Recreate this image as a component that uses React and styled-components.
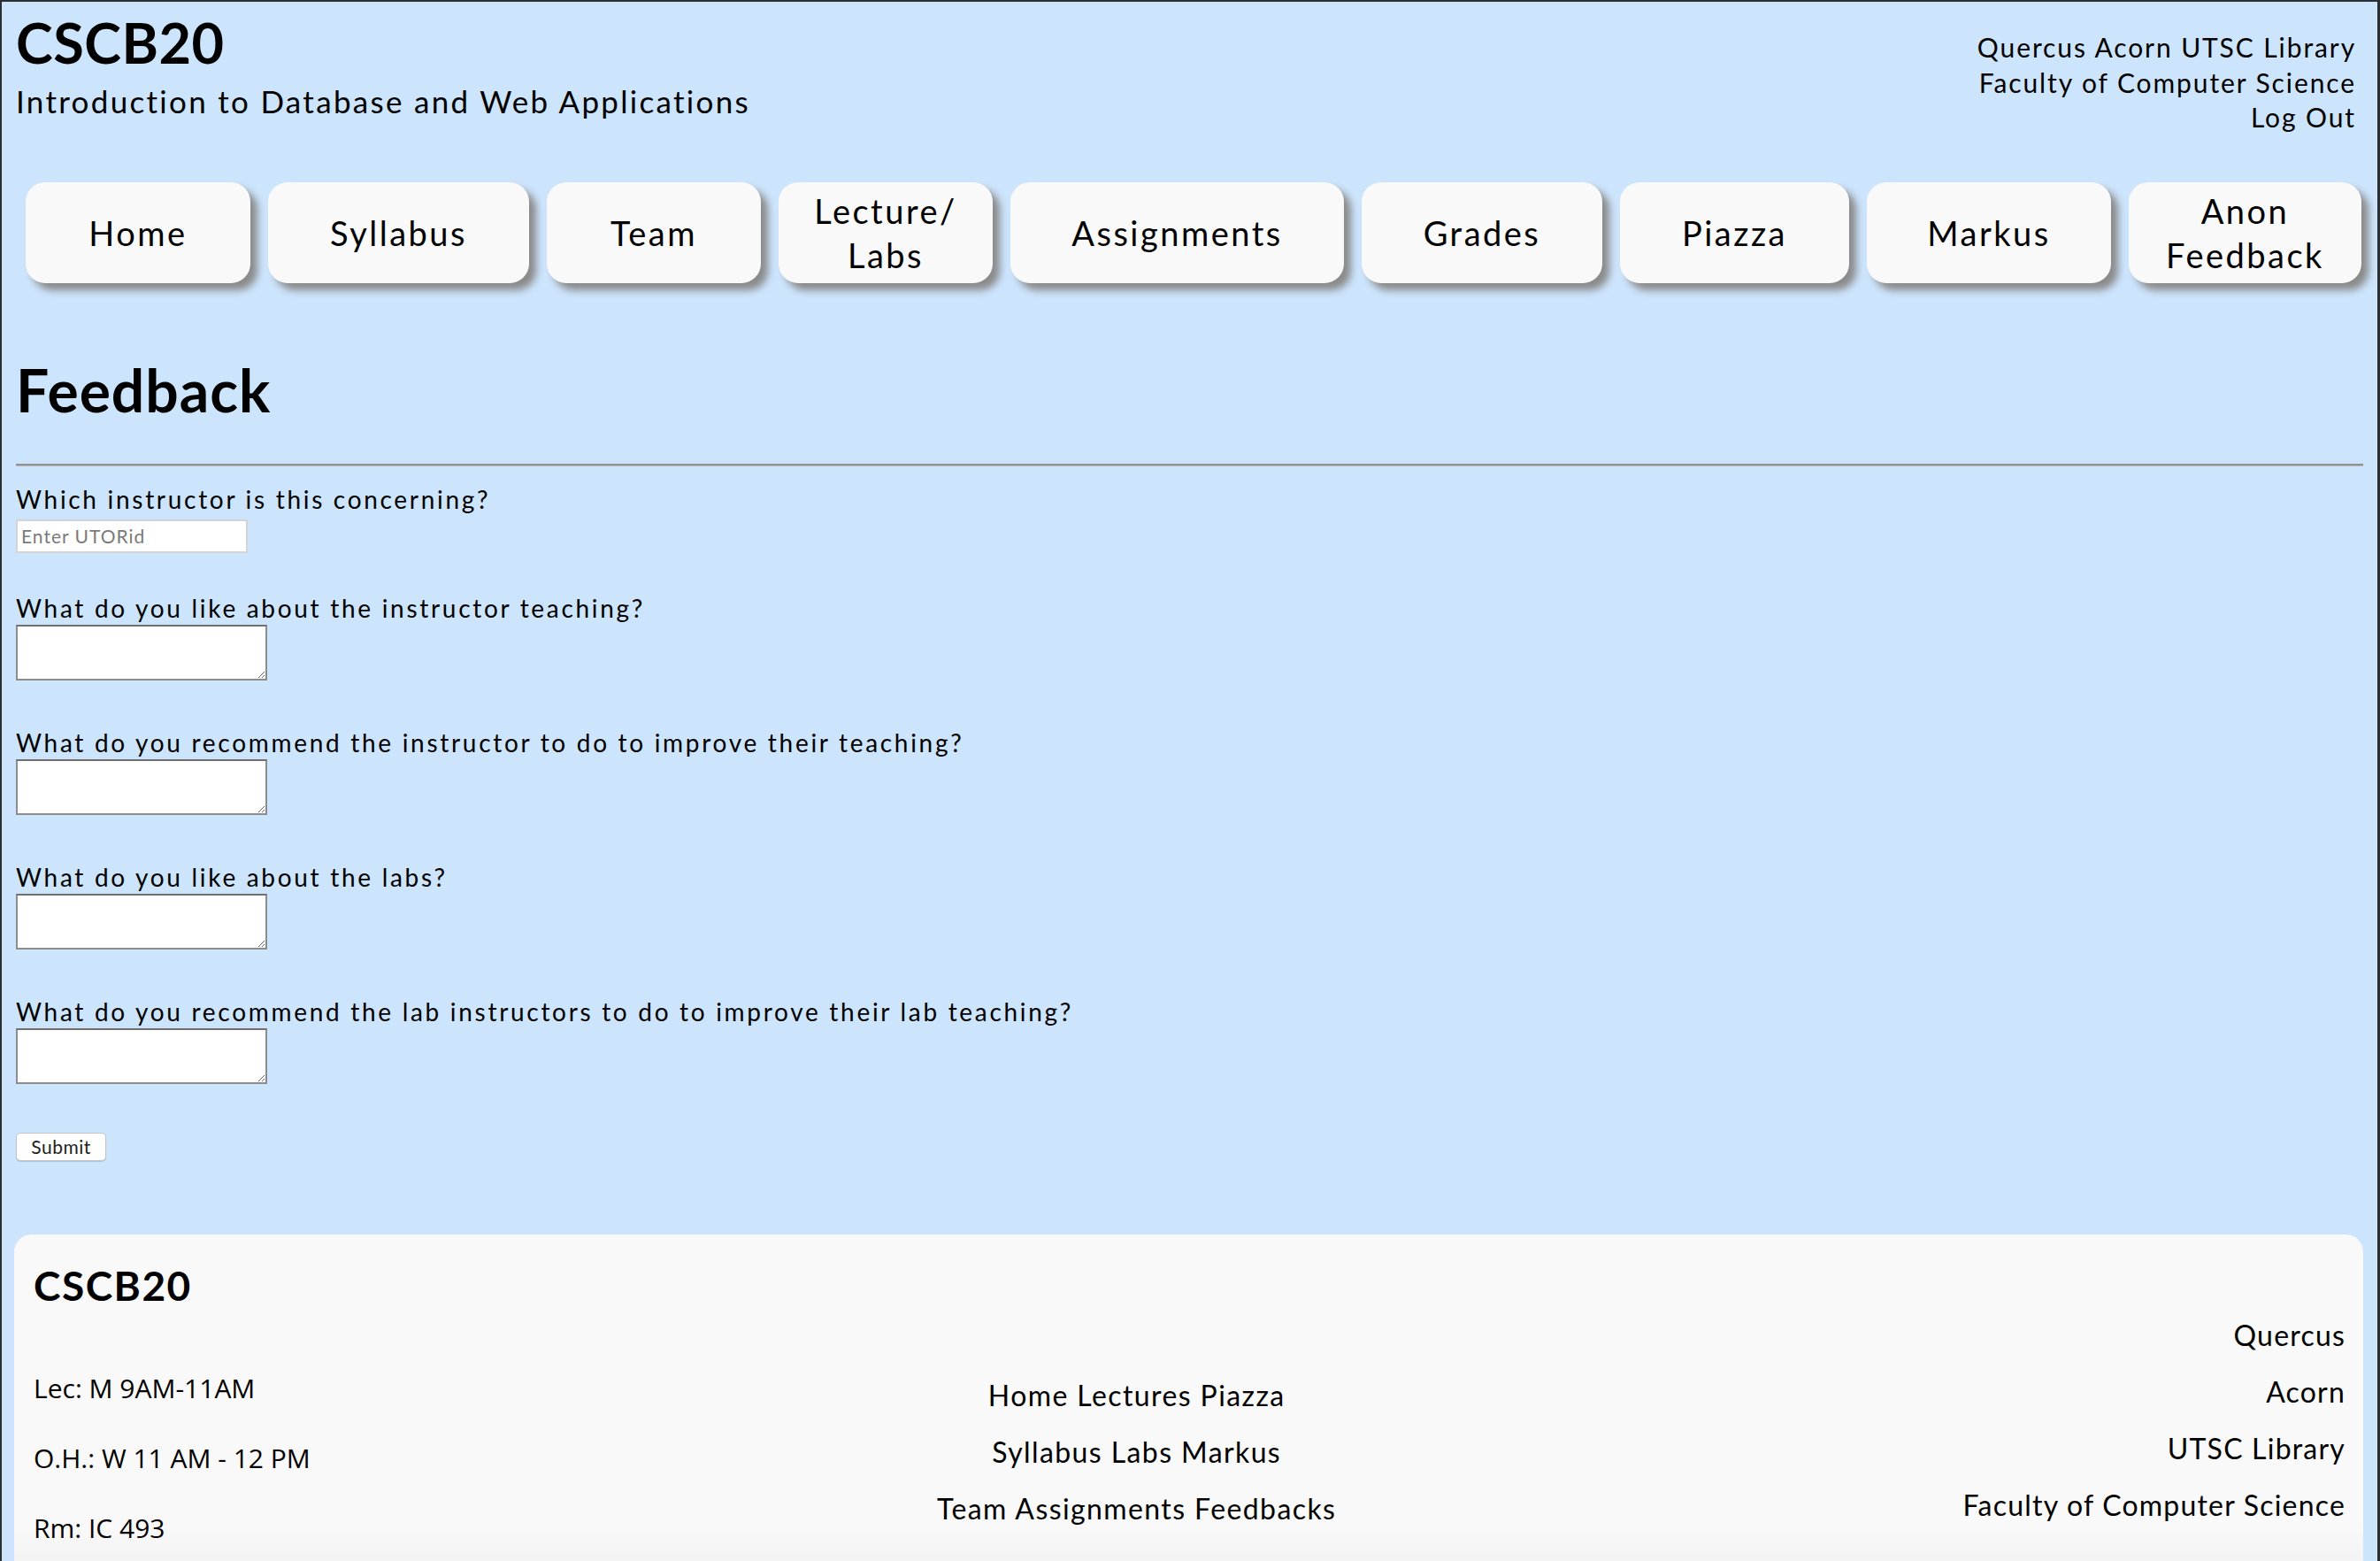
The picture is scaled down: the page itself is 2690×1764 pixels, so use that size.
import React from "react";
import styled, { createGlobalStyle } from "styled-components";

const GlobalStyle = createGlobalStyle`
  html, body {
    margin: 0;
    padding: 0;
    background: #2b2e33;
  }
  body {
    font-family: "Lato", "Noto Sans", sans-serif;
    color: #000;
  }
`;

const navItems = [
  { label: "Home", w: 254 },
  { label: "Syllabus", w: 295 },
  { label: "Team", w: 242 },
  { label: "Lecture/ Labs", w: 242 },
  { label: "Assignments", w: 377 },
  { label: "Grades", w: 272 },
  { label: "Piazza", w: 259 },
  { label: "Markus", w: 276 },
  { label: "Anon Feedback", w: 263 },
];

const questions = [
  "What do you like about the instructor teaching?",
  "What do you recommend the instructor to do to improve their teaching?",
  "What do you like about the labs?",
  "What do you recommend the lab instructors to do to improve their lab teaching?",
];

export default function App() {
  return (
    <>
      <GlobalStyle />
      <Frame>
        <Header>
          <div className="brand">
            <h1>CSCB20</h1>
            <p>Introduction to Database and Web Applications</p>
          </div>
          <div className="links">
            <div>Quercus Acorn UTSC Library</div>
            <div>Faculty of Computer Science</div>
            <div>Log Out</div>
          </div>
        </Header>

        <Nav>
          {navItems.map((item) => (
            <NavButton key={item.label} $w={item.w}>
              {item.label}
            </NavButton>
          ))}
        </Nav>

        <Main>
          <PageTitle>Feedback</PageTitle>
          <Rule />
          <Form>
            <Field $gap={20}>
              <Label>Which instructor is this concerning?</Label>
              <TextInput placeholder="Enter UTORid" />
            </Field>
            {questions.map((q, i) => (
              <Field key={q} $gap={i === 0 ? 45 : 53}>
                <Label>{q}</Label>
                <TextArea />
              </Field>
            ))}
            <SubmitButton type="button">Submit</SubmitButton>
          </Form>
        </Main>

        <Footer>
          <div className="info">
            <h2>CSCB20</h2>
            <p>Lec: M 9AM-11AM</p>
            <p>O.H.: W 11 AM - 12 PM</p>
            <p>Rm: IC 493</p>
          </div>
          <div className="sitemap">
            <div>Home Lectures Piazza</div>
            <div>Syllabus Labs Markus</div>
            <div>Team Assignments Feedbacks</div>
          </div>
          <div className="external">
            <div>Quercus</div>
            <div>Acorn</div>
            <div>UTSC Library</div>
            <div>Faculty of Computer Science</div>
          </div>
        </Footer>
      </Frame>
    </>
  );
}

const Frame = styled.div`
  background: #cce4fc;
  border-top: 2px solid #2b2e33;
  border-left: 2px solid #2b2e33;
  border-right: 3px solid #2b2e33;
  min-height: 1762px;
  padding: 0 16px 0 14px;
  overflow: hidden;
`;

const Header = styled.header`
  display: flex;
  justify-content: space-between;
  align-items: flex-start;
  .brand{
      h1{
          margin: 13px 0 0 2px;
          font-size: 63px;
          line-height: 66px;
          font-weight: 700;
          letter-spacing: 0.5px;
      }
      p{
          margin: 13px 0 0 2px;
          font-size: 35px;
          line-height: 40px;
          letter-spacing: 2.3px;
      }
  }
  .links{
      margin: 32px 8px 0 0;
      text-align: right;
      font-size: 30px;
      line-height: 39.5px;
      letter-spacing: 1.9px;
  }
`;

const Nav = styled.nav`
  display: flex;
  gap: 20px;
  margin: 53px 0 0 13px;
`;

const NavButton = styled.div`
  width: ${(p) => p.$w}px;
  flex: none;
  height: 114px;
  box-sizing: border-box;
  display: flex;
  align-items: center;
  justify-content: center;
  text-align: center;
  padding: 0 20px;
  background: #f9f9f9;
  border-radius: 22px;
  box-shadow: 8px 8px 8px #8a8a8a;
  font-size: 38px;
  line-height: 50px;
  letter-spacing: 2.5px;
`;

const Main = styled.main`
  padding-left: 2px;
`;

const PageTitle = styled.h1`
  margin: 88px 0 0 0;
  font-size: 66px;
  line-height: 66px;
  font-weight: 700;
  letter-spacing: 1px;
`;

const Rule = styled.hr`
  margin: 50px 0 0 0;
  border: none;
  border-top: 2px solid #929292;
  border-bottom: 1px solid #b5b5b5;
`;

const Form = styled.form`
  display: flex;
  flex-direction: column;
  align-items: flex-start;
`;

const Field = styled.div`
  display: flex;
  flex-direction: column;
  align-items: flex-start;
  margin-top: ${(p) => p.$gap}px;
`;

const Label = styled.label`
  font-size: 28px;
  line-height: 34px;
  letter-spacing: 2.7px;
`;

const TextInput = styled.input`
  margin-top: 6px;
  width: 262px;
  height: 38px;
  box-sizing: border-box;
  border: 2px solid #d4d4d4;
  background: #fff;
  padding: 0 4px;
  font-family: "Lato", sans-serif;
  font-size: 21px;
  letter-spacing: 1px;
  &::placeholder{
      color: #7a7a7a;
  }
`;

const TextArea = styled.textarea`
  margin-top: 2px;
  width: 284px;
  height: 63px;
  box-sizing: border-box;
  border: 2px solid #8c8c8c;
  border-top-color: #6f6f6f;
  background: #fff;
  resize: both;
`;

const SubmitButton = styled.button`
  margin-top: 55px;
  width: 102px;
  height: 32px;
  background: #fff;
  border: 1px solid #c4c4c4;
  border-radius: 5px;
  font-family: "Lato", sans-serif;
  font-size: 21px;
  letter-spacing: 0.5px;
  color: #222;
  box-shadow: 0 1px 1px rgba(0, 0, 0, 0.15);
`;

const Footer = styled.footer`
  margin-top: 83px;
  height: 460px;
  background: linear-gradient(to bottom, #f9f9f9 0, #f9f9f9 330px, #efefef 400px);
  border-radius: 20px;
  padding: 20px 20px 0 22px;
  display: flex;
  justify-content: space-between;
  align-items: flex-start;
  .info{
      h2{
          margin: 0;
          font-size: 46px;
          line-height: 76px;
          font-weight: 700;
          letter-spacing: 1.5px;
      }
      p{
          margin: 0;
          font-family: "Open Sans", sans-serif;
          font-size: 30px;
          line-height: 79px;
      }
      h2 + p{
          margin-top: 38px;
      }
  }
  .sitemap{
      padding-top: 130px;
      text-align: center;
      font-size: 32px;
      line-height: 64px;
      letter-spacing: 1.4px;
  }
  .external{
      padding-top: 62px;
      text-align: right;
      font-size: 32px;
      line-height: 64px;
      letter-spacing: 1.2px;
  }
`;
